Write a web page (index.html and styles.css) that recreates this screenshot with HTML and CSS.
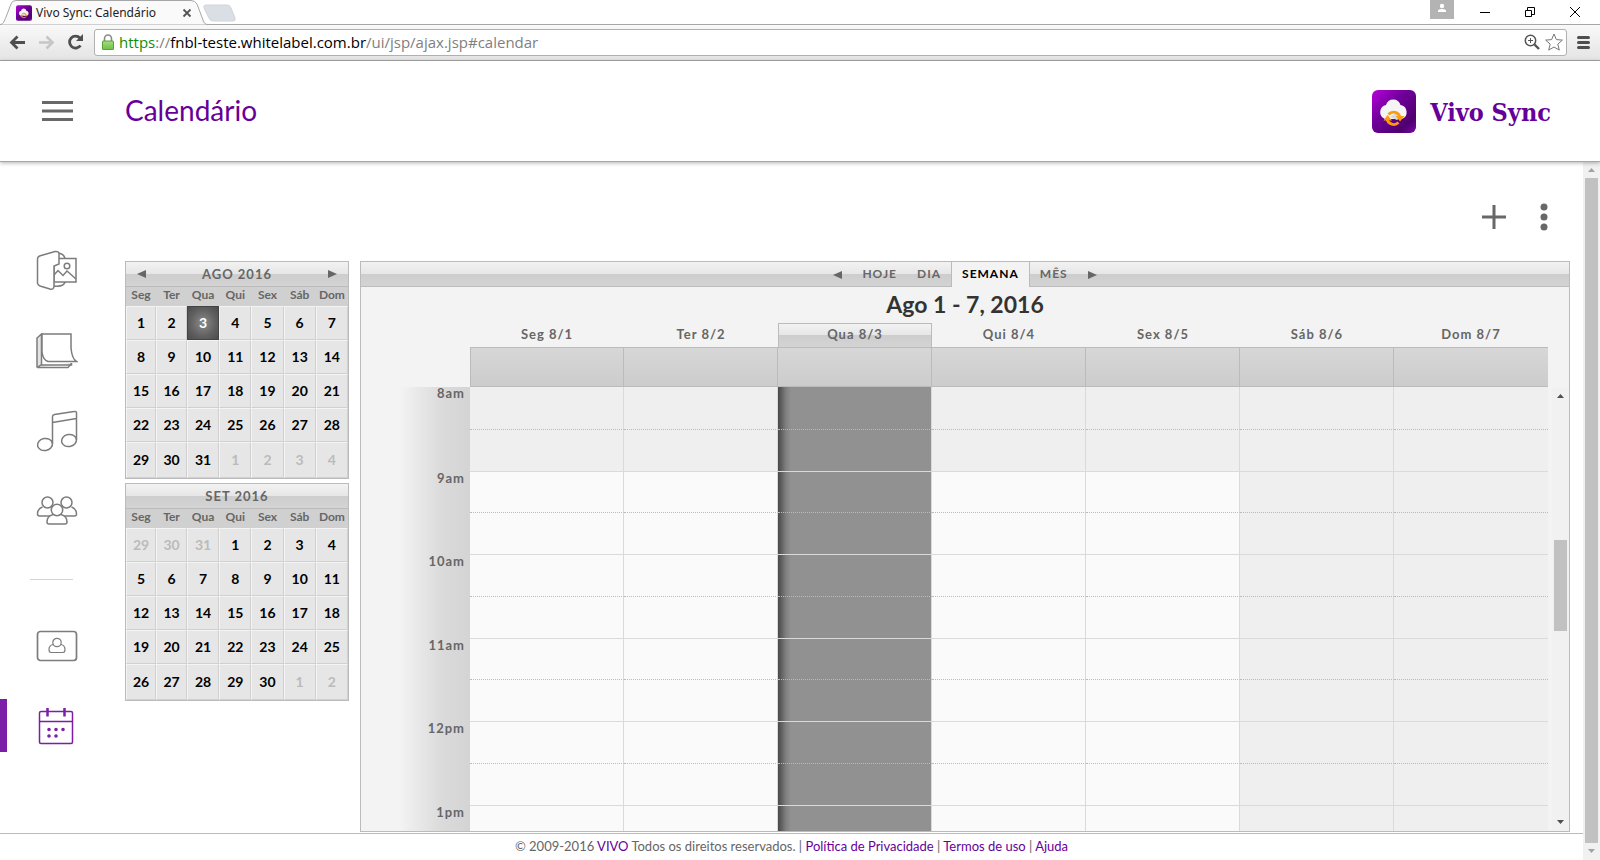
FILE: index.html
```html
<!DOCTYPE html>
<html lang="pt-BR">
<head>
<meta charset="utf-8">
<title>Vivo Sync: Calendário</title>
<link rel="stylesheet" href="styles.css">
</head>
<body>
<svg width="0" height="0" class="defs" aria-hidden="true">
  <defs>
    <linearGradient id="brand" x1="0" y1="0" x2="1" y2="1"><stop offset="0" stop-color="#b800dc"/><stop offset=".4" stop-color="#6f0099"/><stop offset=".8" stop-color="#4f0070"/><stop offset="1" stop-color="#7a0aa8"/></linearGradient>
    <linearGradient id="lock" x1="0" y1="0" x2="0" y2="1"><stop offset="0" stop-color="#a5dc82"/><stop offset="1" stop-color="#6fc043"/></linearGradient>
    <symbol id="logo" viewBox="0 0 44 43">
      <rect width="44" height="43" rx="6" fill="url(#brand)"/>
      <path d="M13 29a7.300 7.300 0 0 1 1-14a7.500 7.500 0 0 1 14.500 0A7.300 7.300 0 0 1 30 29z" fill="#f5f5f5"/>
      <path d="M16 29h12q-2 5-6 5t-6-5z" fill="#5c0080"/>
      <path d="M18 27l6-4l4 5l-3 2z" fill="#d8d8d8"/>
      <path d="M16.500 24.500a6.500 6.500 0 0 1 11.500 3.500M26.500 32.500a6.800 6.800 0 0 1-11.500-3.500" fill="none" stroke="#ff9a0d" stroke-width="2.800"/>
      <path d="M11.500 30.500l4-5.500l4.500 5.500zM24 26h8.500l-4.500 5.500z" fill="#ff9a0d"/>
    </symbol>
    <symbol id="left" viewBox="0 0 9 8"><path d="M9 0v8L0 4z" fill="#666"/></symbol>
    <symbol id="right" viewBox="0 0 9 8"><path d="M0 0v8L9 4z" fill="#666"/></symbol>
  </defs>
</svg>

<div class="tabstrip">
  <div class="tab">
    <svg class="tab-shape" viewBox="0 0 240 25" width="240" height="25" aria-hidden="true">
      <path d="M0 24.500C4 24 4 21 6 17L11 4Q12 .5 16 .5H191Q195 .5 197 4L203 20Q204 24.500 208 24.500" fill="#fafafa" stroke="#a6a6a6"/>
      <path d="M206 5h21q3 0 4 3l4 10q1 3-2 3h-20q-3 0-4-3l-5-10q-1-3 2-3z" fill="#dadfe6" stroke="#cfd4da"/>
    </svg>
    <div class="tab-content">
      <svg width="16" height="16"><use href="#logo"/></svg>
      <span class="tab-title">Vivo Sync: Calendário</span>
      <button class="plain" aria-label="Fechar guia"><svg width="10" height="10" viewBox="0 0 10 10"><path d="M1.500 1.500l7 7m0-7l-7 7" stroke="#555" stroke-width="1.800"/></svg></button>
    </div>
  </div>
  <div class="window-buttons">
    <button class="profile" aria-label="Perfil"><svg width="24" height="19" viewBox="0 0 24 19"><circle cx="12" cy="6" r="2.200" fill="#fff"/><path d="M8 12v-1q0-2 4-2t4 2v1z" fill="#fff"/></svg></button>
    <button class="plain" aria-label="Minimizar"><svg width="12" height="12"><path d="M1 6.500h10" stroke="#000"/></svg></button>
    <button class="plain" aria-label="Restaurar"><svg width="12" height="12" fill="none" stroke="#000"><path d="M1.500 4.500h6v6h-6zM3.500 4.500v-3h7v7h-3"/></svg></button>
    <button class="plain" aria-label="Fechar"><svg width="12" height="12"><path d="M1 1l10 10M11 1L1 11" stroke="#000"/></svg></button>
  </div>
</div>

<div class="toolbar">
  <button class="plain" aria-label="Voltar"><svg width="17" height="15" viewBox="0 0 17 15" fill="none" stroke="#4f4f4f" stroke-width="2.800"><path d="M16 7.500H3M8.500 1.500L2.500 7.500l6 6"/></svg></button>
  <button class="plain" aria-label="Avançar"><svg width="17" height="15" viewBox="0 0 17 15" fill="none" stroke="#c6c6c6" stroke-width="2.600"><path d="M1 7.500h13M8.500 1.500l6 6l-6 6"/></svg></button>
  <button class="plain" aria-label="Recarregar"><svg width="17" height="16" viewBox="0 0 17 16"><path d="M13.500 11.500A6 6 0 1 1 13 4" fill="none" stroke="#4f4f4f" stroke-width="2.800"/><path d="M9 7h7V0z" fill="#4f4f4f"/></svg></button>
  <div class="omnibox">
    <svg width="12" height="16" viewBox="0 0 12 16"><path d="M2.500 8V4.500a3.500 3.500 0 0 1 7 0V8" fill="none" stroke="#8a8a8a" stroke-width="1.600"/><rect x=".5" y="7" width="11" height="8.500" rx=".5" fill="url(#lock)" stroke="#59a336"/></svg>
    <div class="url" role="textbox" aria-label="Endereço" contenteditable="true" spellcheck="false"><span class="secure">https</span>://<span class="host">fnbl-teste.whitelabel.com.br</span>/ui/jsp/ajax.jsp#calendar</div>
    <svg width="16" height="16" viewBox="0 0 16 16" fill="none" stroke="#555"><circle cx="6.500" cy="6.500" r="5.200" stroke-width="1.500"/><path d="M6.500 4v5M4 6.500h5"/><path d="M10.500 10.500l4.500 4.500" stroke-width="2.400"/></svg>
    <button class="plain" aria-label="Favoritos"><svg width="18" height="18" viewBox="0 0 18 18"><path d="M9 1l2.400 5.600l6 .500l-4.600 4l1.500 6L9 14l-5.300 3.100l1.500-6l-4.600-4l6-.500z" fill="#fff" stroke="#777"/></svg></button>
  </div>
  <button class="plain" aria-label="Menu do navegador"><svg width="13" height="13" viewBox="0 0 13 13" stroke="#4f4f4f" stroke-width="3" stroke-linecap="round"><path d="M1.500 1.500h10M1.500 6.500h10M1.500 11.500h10"/></svg></button>
</div>

<header class="app-header">
  <button class="plain" aria-label="Menu"><svg width="31" height="20" viewBox="0 0 31 20" stroke="#686868" stroke-width="3"><path d="M0 1.500h31M0 10h31M0 18.500h31"/></svg></button>
  <h1>Calendário</h1>
  <a class="brand" href="#"><svg width="44" height="43"><use href="#logo"/></svg><span>Vivo Sync</span></a>
</header>

<div class="viewport">
  <div class="page">
    <div class="workspace">
      <nav class="side" aria-label="Seções">
        <a href="#fotos" aria-label="Fotos"><svg width="42" height="42" viewBox="0 0 42 42" fill="#fff" stroke="#7c7c7c" stroke-width="1.500"><path d="M22 3q7 1 7 7v22q-1 5-11 4"/><path d="M18 8.500h22v23.500H18z"/><circle cx="31" cy="16" r="2.800"/><path d="M18 25l4-4.500l5 5l4-4.500l9 8" fill="none"/><path d="M1.500 9q0-2 2-3L19 1.500q4-.5 4 2.500v10l-5 2v20q0 4-4 3L4 36q-2.500-1-2.500-3z"/></svg></a>
        <a href="#notas" aria-label="Notas"><svg width="42" height="36" viewBox="0 0 42 36" fill="#fff" stroke="#7c7c7c" stroke-width="1.500"><path d="M1 34.500V5l4.500-4V32h30v-2" fill="#e4e4e4"/><path d="M1 34.500h31l3.500-4M1 34.500l4.500-3" fill="none"/><path d="M6 1h29v14q1 11 5.500 13.500H12Q7 27 6 19z"/></svg></a>
        <a href="#musica" aria-label="Música"><svg width="42" height="42" viewBox="0 0 42 42" fill="none" stroke="#7c7c7c" stroke-width="1.500"><ellipse cx="9" cy="34.500" rx="7.500" ry="6" transform="rotate(-10 9 34.500)"/><ellipse cx="33" cy="30.500" rx="7.500" ry="6" transform="rotate(-10 33 30.500)"/><path d="M16.500 34V6.500q0-1.500 2-2L38 1.500q2.500-.5 2.500 1.500V30M16.500 12.500l24-4"/></svg></a>
        <a href="#grupos" aria-label="Grupos"><svg width="42" height="30" viewBox="0 0 42 30" fill="#fff" stroke="#7c7c7c" stroke-width="1.500"><path d="M6.500 11Q1.500 13 1.500 18q0 2 2 2h15M35.500 11Q40.500 13 40.500 18q0 2-2 2h-15"/><circle cx="11.500" cy="6.500" r="5.500"/><circle cx="30.500" cy="6.500" r="5.500"/><path d="M17 18.500q-6 1.500-6 7.500q0 2 2 2h16q2 0 2-2q0-6-6-7.500z"/><circle cx="21" cy="14" r="5.700"/></svg></a>
        <hr>
        <a href="#contatos" aria-label="Contatos"><svg width="42" height="32" viewBox="0 0 42 32" fill="#fff" stroke="#7c7c7c" stroke-width="1.700"><rect x="1.500" y="1.500" width="39" height="29" rx="3"/><path d="M17 14.500q-4 1-4 5q0 3 2 3h12q2 0 2-3q0-4-4-5z" stroke-width="1.200"/><circle cx="21" cy="12.500" r="4.200" stroke-width="1.200"/></svg></a>
        <a class="current" href="#calendar" aria-label="Calendário"><svg width="36" height="38" viewBox="0 0 36 38" fill="none" stroke="#7b1fa8" stroke-width="1.500"><rect x="1.500" y="4.500" width="33" height="32" rx="1.500"/><path d="M1.500 14.500h33"/><path d="M9.500 1v8.500M26.500 1v8.500" stroke-width="2.500"/><path d="M11 22.500h.01M18 22.500h.01M25 22.500h.01M11 29h.01M18 29h.01" stroke-width="3.600" stroke-linecap="round"/></svg></a>
      </nav>

      <main>
        <div class="actions">
          <button class="plain" aria-label="Adicionar"><svg width="24" height="24" stroke="#686868" stroke-width="3"><path d="M12 0v24M0 12h24"/></svg></button>
          <button class="plain" aria-label="Mais opções"><svg width="8" height="28" fill="#686868"><circle cx="4" cy="4" r="3.500"/><circle cx="4" cy="14" r="3.500"/><circle cx="4" cy="24" r="3.500"/></svg></button>
        </div>
        <div class="columns">
          <aside class="months">
            <section class="month">
              <div class="month-bar"><button class="plain" aria-label="Mês anterior"><svg width="9" height="8"><use href="#left"/></svg></button><h2>AGO 2016</h2><button class="plain" aria-label="Próximo mês"><svg width="9" height="8"><use href="#right"/></svg></button></div>
              <table>
                <thead><tr><th>Seg</th><th>Ter</th><th>Qua</th><th>Qui</th><th>Sex</th><th>Sáb</th><th>Dom</th></tr></thead>
                <tbody>
                  <tr><td>1</td><td>2</td><td class="selected">3</td><td>4</td><td>5</td><td>6</td><td>7</td></tr>
                  <tr><td>8</td><td>9</td><td>10</td><td>11</td><td>12</td><td>13</td><td>14</td></tr>
                  <tr><td>15</td><td>16</td><td>17</td><td>18</td><td>19</td><td>20</td><td>21</td></tr>
                  <tr><td>22</td><td>23</td><td>24</td><td>25</td><td>26</td><td>27</td><td>28</td></tr>
                  <tr><td>29</td><td>30</td><td>31</td><td class="other">1</td><td class="other">2</td><td class="other">3</td><td class="other">4</td></tr>
                </tbody>
              </table>
            </section>
            <section class="month">
              <div class="month-bar"><h2>SET 2016</h2></div>
              <table>
                <thead><tr><th>Seg</th><th>Ter</th><th>Qua</th><th>Qui</th><th>Sex</th><th>Sáb</th><th>Dom</th></tr></thead>
                <tbody>
                  <tr><td class="other">29</td><td class="other">30</td><td class="other">31</td><td>1</td><td>2</td><td>3</td><td>4</td></tr>
                  <tr><td>5</td><td>6</td><td>7</td><td>8</td><td>9</td><td>10</td><td>11</td></tr>
                  <tr><td>12</td><td>13</td><td>14</td><td>15</td><td>16</td><td>17</td><td>18</td></tr>
                  <tr><td>19</td><td>20</td><td>21</td><td>22</td><td>23</td><td>24</td><td>25</td></tr>
                  <tr><td>26</td><td>27</td><td>28</td><td>29</td><td>30</td><td class="other">1</td><td class="other">2</td></tr>
                </tbody>
              </table>
            </section>
          </aside>

          <section class="week">
            <div class="views">
              <button class="view arrow" aria-label="Semana anterior"><svg width="9" height="8"><use href="#left"/></svg></button>
              <button class="view">HOJE</button>
              <button class="view">DIA</button>
              <button class="view active">SEMANA</button>
              <button class="view">MÊS</button>
              <button class="view arrow" aria-label="Próxima semana"><svg width="9" height="8"><use href="#right"/></svg></button>
            </div>
            <h2 class="range">Ago 1 - 7, 2016</h2>
            <div class="schedule">
              <div class="grid-clip">
                <table class="grid">
                  <thead>
                    <tr class="days"><th class="hour"></th><th>Seg 8/1</th><th>Ter 8/2</th><th class="today">Qua 8/3</th><th>Qui 8/4</th><th>Sex 8/5</th><th>Sáb 8/6</th><th>Dom 8/7</th></tr>
                    <tr class="allday"><th class="hour"></th><td></td><td></td><td></td><td></td><td></td><td></td><td></td></tr>
                  </thead>
                  <tbody>
                    <tr class="half early"><th class="hour" rowspan="2">8am</th><td></td><td></td><td class="today"></td><td></td><td></td><td class="off"></td><td class="off"></td></tr>
                    <tr class="full early"><td></td><td></td><td class="today"></td><td></td><td></td><td class="off"></td><td class="off"></td></tr>
                    <tr class="half"><th class="hour" rowspan="2">9am</th><td></td><td></td><td class="today"></td><td></td><td></td><td class="off"></td><td class="off"></td></tr>
                    <tr class="full"><td></td><td></td><td class="today"></td><td></td><td></td><td class="off"></td><td class="off"></td></tr>
                    <tr class="half"><th class="hour" rowspan="2">10am</th><td></td><td></td><td class="today"></td><td></td><td></td><td class="off"></td><td class="off"></td></tr>
                    <tr class="full"><td></td><td></td><td class="today"></td><td></td><td></td><td class="off"></td><td class="off"></td></tr>
                    <tr class="half"><th class="hour" rowspan="2">11am</th><td></td><td></td><td class="today"></td><td></td><td></td><td class="off"></td><td class="off"></td></tr>
                    <tr class="full"><td></td><td></td><td class="today"></td><td></td><td></td><td class="off"></td><td class="off"></td></tr>
                    <tr class="half"><th class="hour" rowspan="2">12pm</th><td></td><td></td><td class="today"></td><td></td><td></td><td class="off"></td><td class="off"></td></tr>
                    <tr class="full"><td></td><td></td><td class="today"></td><td></td><td></td><td class="off"></td><td class="off"></td></tr>
                    <tr class="half"><th class="hour" rowspan="2">1pm</th><td></td><td></td><td class="today"></td><td></td><td></td><td class="off"></td><td class="off"></td></tr>
                    <tr class="full"><td></td><td></td><td class="today"></td><td></td><td></td><td class="off"></td><td class="off"></td></tr>
                  </tbody>
                </table>
              </div>
              <div class="scrollbar inner" aria-hidden="true">
                <svg width="7" height="4"><path d="M0 4L3.500 0L7 4z" fill="#505050"/></svg>
                <div class="track"><div class="thumb"></div></div>
                <svg width="7" height="4"><path d="M0 0L3.500 4L7 0z" fill="#505050"/></svg>
              </div>
            </div>
          </section>
        </div>
      </main>
    </div>
    <footer>© 2009-2016 <a href="#vivo">VIVO</a> Todos os direitos reservados. | <a href="#privacidade">Política de Privacidade</a> | <a href="#termos">Termos de uso</a> | <a href="#ajuda">Ajuda</a></footer>
  </div>
  <div class="scrollbar" aria-hidden="true">
    <svg width="7" height="4"><path d="M0 4L3.500 0L7 4z" fill="#a3a3a3"/></svg>
    <div class="track"><div class="thumb"></div></div>
    <svg width="7" height="4"><path d="M0 0L3.500 4L7 0z" fill="#a3a3a3"/></svg>
  </div>
</div>
</body>
</html>
```
FILE: styles.css
```css
* { box-sizing: border-box; }

body {
  margin: 0;
  height: 100vh;
  display: flex;
  flex-direction: column;
  overflow: hidden;
  background: #fff;
  color: #666;
  font-family: Lato, "Open Sans", sans-serif;
}

a { color: #660099; text-decoration: none; }
h1, h2 { margin: 0; }
svg { display: block; flex: none; }
.defs { position: absolute; }
table { border-collapse: separate; border-spacing: 0; table-layout: fixed; width: 100%; }
th, td { padding: 0; }

button { font-family: inherit; cursor: pointer; }
.plain { display: block; flex: none; border: 0; padding: 0; background: none; }

/* Browser frame */
.tabstrip {
  display: flex;
  justify-content: space-between;
  height: 25px;
  flex: none;
  border-bottom: 1px solid #a6a6a6;
}
.tab { position: relative; width: 240px; }
.tab-shape { position: absolute; left: 0; top: 0; }
.tab-content {
  position: relative;
  display: flex;
  align-items: center;
  gap: 4px;
  width: 192px;
  height: 25px;
  padding-left: 16px;
  font: 12px/16px "Noto Sans", "Open Sans", sans-serif;
  color: #222;
}
.tab-title { flex: 1; white-space: nowrap; }
.window-buttons { display: flex; align-items: center; gap: 33px; padding-right: 19px; }
.profile { align-self: flex-start; margin-right: -8px; border: 0; padding: 0; background: #b3b3b3; }
.profile { margin-right: -8px; }

.toolbar {
  display: flex;
  align-items: center;
  gap: 12px;
  height: 36px;
  flex: none;
  padding: 0 10px 1px 9px;
  background: linear-gradient(#f9f9f9, #e4e4e4);
  border-bottom: 1px solid #a6a6a6;
}
.omnibox {
  flex: 1;
  display: flex;
  align-items: center;
  gap: 5px;
  height: 27px;
  margin: 0 -2px;
  padding: 0 3px 0 7px;
  background: #fff;
  border: 1px solid #b0b0b0;
  border-radius: 3px;
}
.url { flex: 1; font: 15px/24px "Open Sans", sans-serif; color: #808080; white-space: nowrap; }
.secure { color: #0b8f0b; }
.host { color: #000; }

/* Application header */
.app-header {
  position: relative;
  display: flex;
  align-items: center;
  height: 101px;
  flex: none;
  padding: 0 49px 0 42px;
  background: #fff;
  border-bottom: 1px solid #a8a8a8;
  box-shadow: 0 1px 4px rgba(0, 0, 0, .3);
}
.app-header h1 { margin-left: 52px; padding-bottom: 2px; font-size: 28px; line-height: 36px; font-weight: 400; color: #660099; }
.brand { display: flex; align-items: center; gap: 14px; margin-left: auto; }
.brand span { padding-top: 4px; font: bold 25px/32px "DejaVu Serif Condensed", "DejaVu Serif", serif; }

.viewport { flex: 1; min-height: 0; display: flex; }
.page { flex: 1; min-width: 0; display: flex; flex-direction: column; }
.workspace { flex: 1; min-height: 0; display: flex; }

/* Section navigation */
.side { display: flex; flex-direction: column; gap: 27px; width: 125px; flex: none; padding-top: 82px; }
.side a { display: flex; align-items: center; justify-content: center; height: 53px; padding-right: 12px; border-left: 0 solid #7b1fa8; }
.side a.current { border-left-width: 7px; padding-right: 20px; }
.side hr { width: 43px; height: 1px; margin: 15px 0 12px 30px; border: 0; background: #d4d4d4; }

main { flex: 1; min-width: 0; display: flex; flex-direction: column; padding-right: 13px; }
.actions { display: flex; align-items: center; justify-content: flex-end; gap: 34px; height: 99px; padding: 11px 22px 0 0; flex: none; }
.columns { flex: 1; min-height: 0; display: flex; gap: 11px; }

/* Month pickers */
.months { width: 224px; flex: none; display: flex; flex-direction: column; gap: 4px; }
.month { border: 1px solid #bbb; background: #e6e6e6; }
.month-bar {
  display: flex;
  align-items: center;
  height: 25px;
  padding: 0 11px;
  background: linear-gradient(#f2f2f2, #e6e6e6 50%, #cdcdcd 50%, #d4d4d4);
  border-bottom: 1px solid #bbb;
}
.month-bar h2 { flex: 1; text-align: center; font-size: 13px; line-height: 16px; font-weight: 700; letter-spacing: 1px; }
.month th { height: 19px; padding-bottom: 3px; font-size: 12px; line-height: 16px; font-weight: 700; background: #d0d0d0; }
.month th:first-child { width: 30px; }
.month th:nth-child(2) { width: 31px; }
.month td {
  height: 34px;
  text-align: center;
  font-size: 14px;
  line-height: 18px;
  font-weight: 700;
  color: #000;
  border: 1px solid #d0d0d0;
  border-top-color: #f4f4f4;
  border-left-color: #f4f4f4;
}
.month tr:last-child td { height: 36px; }
.month td.other { color: #bbb; }
.month td.selected { color: #fff; border-color: #444; background: radial-gradient(#8c8c8c, #606060 60%, #4c4c4c); }

/* Week view */
.week { flex: 1; min-width: 0; display: flex; flex-direction: column; border: 1px solid #bbb; background: #f3f3f3; margin-bottom: 1px; }
.views {
  display: flex;
  justify-content: center;
  height: 25px;
  flex: none;
  background: linear-gradient(#f2f2f2, #e6e6e6 50%, #cdcdcd 50%, #d4d4d4);
  box-shadow: inset 0 -1px #bbb;
}
.view { border: 0; padding: 0 10px 2px; background: none; color: #666; font-size: 12px; line-height: 16px; font-weight: 700; letter-spacing: 1px; }
.view.arrow { padding-top: 3px; }
.view.active { background: #f3f3f3; color: #000; border: 1px solid #bbb; border-width: 0 1px; }
.range { height: 36px; flex: none; text-align: center; font-size: 23px; line-height: 35px; font-weight: 700; color: #333; }

.schedule { flex: 1; min-height: 0; display: flex; gap: 4px; }
.grid-clip { flex: 1; min-width: 0; overflow: hidden; }
.grid .hour { width: 109px; vertical-align: top; text-align: right; padding-right: 5px; border: 0; }
.grid th { font-size: 13px; line-height: 16px; font-weight: 700; letter-spacing: 1px; }
.grid tbody th { line-height: 12px; }
.days th { height: 25px; border-bottom: 1px solid #bbb; padding-bottom: 3px; }
.days .today { background: linear-gradient(#f2f2f2, #e6e6e6 50%, #cdcdcd 50%, #d4d4d4); border: 1px solid #bbb; }
.allday td { height: 39px; background: linear-gradient(#d7d7d7, #ccc); border: 1px solid #bbb; border-width: 0 1px 1px 0; }
.allday .hour + td { border-left-width: 1px; }
tbody .hour { background: linear-gradient(90deg, #f3f3f3 36%, #dadada 75%, #d4d4d4); }
.half td { height: 42px; border-bottom: 1px dotted #bbb; }
.full td { height: 42px; border-bottom: 1px solid #dadada; }
.grid tbody td { background-color: #fafafa; border-right: 1px solid #dadada; }
.grid tbody tr:first-child td { height: 43px; }
.grid tbody tr:nth-child(4n+3) td { height: 41px; }
.grid tbody .early td, .grid tbody td.off { background-color: #efefef; }
.grid tbody td.today { background: linear-gradient(90deg, #484848, #808080 8px, #919191 13px); }
.grid tbody td:last-child, .allday td:last-child { border-right: 0; }

.scrollbar { display: flex; flex-direction: column; align-items: center; width: 17px; flex: none; padding: 6px 0 7px; gap: 6px; background: #f1f1f1; }
.scrollbar .track { flex: 1; display: flex; flex-direction: column; align-items: center; }
.thumb { width: 13px; flex: 1; background: #c1c1c1; }
.inner { margin-top: 65px; }
.inner .track { justify-content: center; padding-bottom: 47px; }
.inner .thumb { flex: none; height: 91px; }

footer { height: 27px; flex: none; border-top: 1px solid #bbb; text-align: center; font-size: 13px; line-height: 25px; }
```
